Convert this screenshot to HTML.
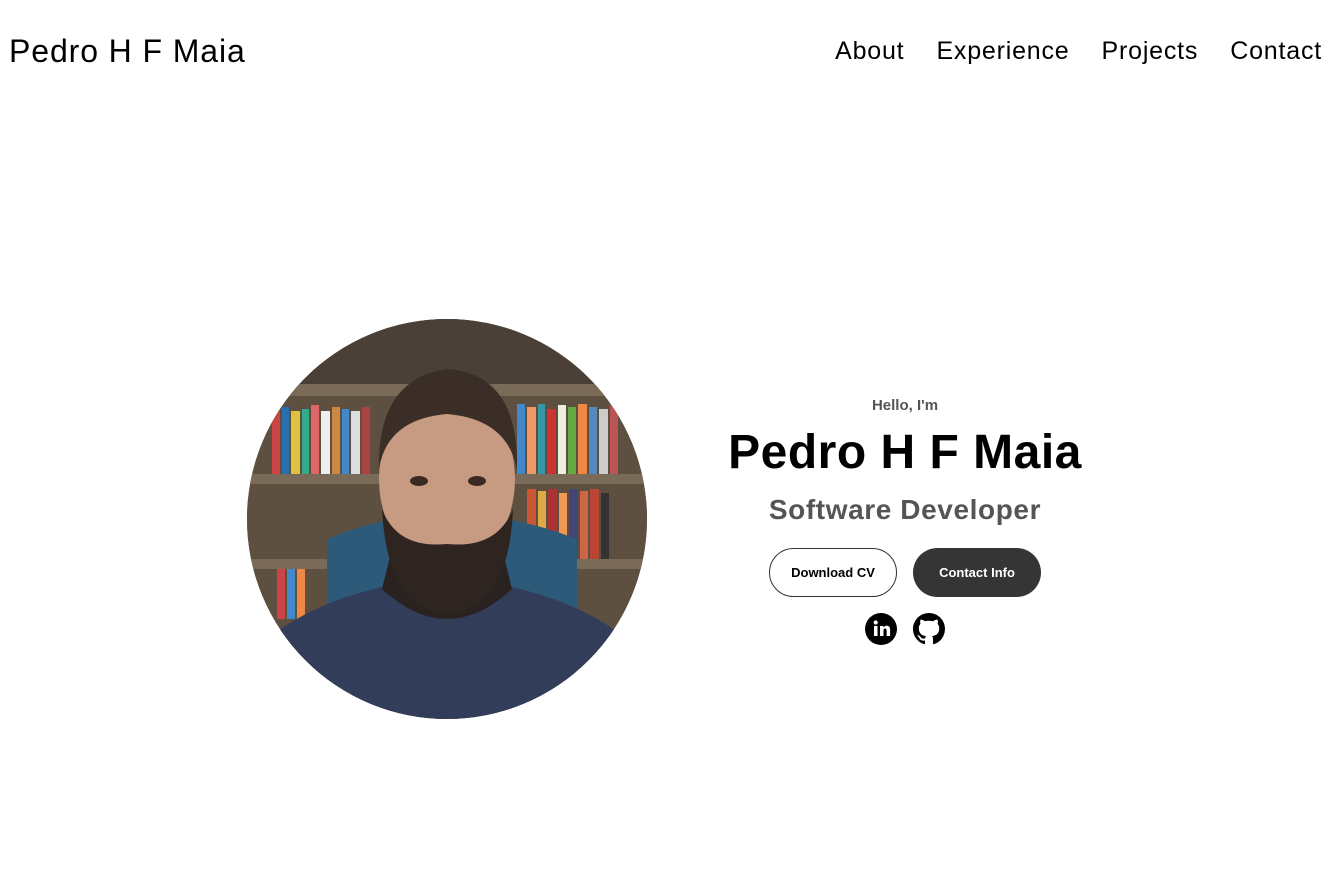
<!DOCTYPE html>
<html><head><meta charset="utf-8"><style>
*{margin:0;padding:0;box-sizing:border-box}
body{width:1336px;height:893px;background:#fff;font-family:"Liberation Sans",sans-serif;position:relative;overflow:hidden;color:#000}
.logo{position:absolute;left:9px;top:33px;font-size:32px;letter-spacing:0.9px}
.nav{position:absolute;right:14px;top:37px;display:flex;gap:32px;font-size:25px;letter-spacing:0.8px}
.pic{position:absolute;left:247px;top:319px;width:400px;height:400px;border-radius:50%;overflow:hidden;background:#6b5a48}
.txt{position:absolute;left:705px;width:400px;text-align:center}
.btn{position:absolute;top:548px;width:128px;height:49px;border-radius:25px;font-size:13px;font-weight:bold;display:flex;align-items:center;justify-content:center}
</style></head><body>
<div class="logo">Pedro H F Maia</div>
<div class="nav"><span>About</span><span>Experience</span><span>Projects</span><span>Contact</span></div>
<div class="pic">
<svg width="400" height="400" viewBox="0 0 400 400">
<rect width="400" height="400" fill="#5e5040"/>
<rect x="0" y="0" width="400" height="70" fill="#4a4038"/>
<rect x="0" y="65" width="400" height="12" fill="#7a6a58"/>
<g fill="#a33">
<rect x="25" y="90" width="8" height="65" fill="#c44"/><rect x="35" y="88" width="7" height="67" fill="#2a6fb0"/><rect x="44" y="92" width="9" height="63" fill="#e0c040"/><rect x="55" y="90" width="7" height="65" fill="#3a8"/><rect x="64" y="86" width="8" height="69" fill="#d66"/><rect x="74" y="92" width="9" height="63" fill="#eee"/><rect x="85" y="88" width="8" height="67" fill="#c84"/><rect x="95" y="90" width="7" height="65" fill="#48c"/><rect x="104" y="92" width="9" height="63" fill="#ddd"/><rect x="115" y="88" width="8" height="67" fill="#a44"/>
<rect x="270" y="85" width="8" height="70" fill="#48c"/><rect x="280" y="88" width="9" height="67" fill="#e96"/><rect x="291" y="85" width="7" height="70" fill="#39a"/><rect x="300" y="90" width="9" height="65" fill="#c33"/><rect x="311" y="86" width="8" height="69" fill="#eed"/><rect x="321" y="88" width="8" height="67" fill="#6a4"/><rect x="331" y="85" width="9" height="70" fill="#e84"/><rect x="342" y="88" width="8" height="67" fill="#58b"/><rect x="352" y="90" width="9" height="65" fill="#ccc"/><rect x="363" y="86" width="8" height="69" fill="#b55"/>
<rect x="280" y="170" width="9" height="70" fill="#c53"/><rect x="291" y="172" width="8" height="68" fill="#da4"/><rect x="301" y="170" width="9" height="70" fill="#a33"/><rect x="312" y="174" width="8" height="66" fill="#e95"/><rect x="322" y="170" width="9" height="70" fill="#447"/><rect x="333" y="172" width="8" height="68" fill="#c64"/><rect x="343" y="170" width="9" height="70" fill="#b43"/><rect x="354" y="174" width="8" height="66" fill="#333"/>
<rect x="30" y="250" width="8" height="50" fill="#c44"/><rect x="40" y="248" width="8" height="52" fill="#48c"/><rect x="50" y="250" width="8" height="50" fill="#e84"/>
</g>
<rect x="0" y="155" width="400" height="10" fill="#7a6a58"/>
<rect x="0" y="240" width="400" height="10" fill="#7a6a58"/>
<path d="M80 220 Q200 170 330 220 L330 290 L80 290Z" fill="#2c5a78"/>
<path d="M20 320 Q70 280 150 265 L200 300 L250 265 Q330 280 380 320 L400 400 L0 400Z" fill="#323d5a"/>
<path d="M135 270 Q200 330 265 270 L255 230 L145 230Z" fill="#2a2220"/>
<ellipse cx="200" cy="160" rx="68" ry="90" fill="#c79a82"/>
<path d="M132 150 Q130 60 200 50 Q272 55 270 150 Q260 100 200 95 Q140 100 132 150Z" fill="#3a2e26"/>
<path d="M135 190 Q140 290 200 295 Q262 290 266 190 Q250 230 200 225 Q150 230 135 190Z" fill="#2e2420"/>
<ellipse cx="172" cy="162" rx="9" ry="5" fill="#3a2a22"/><ellipse cx="230" cy="162" rx="9" ry="5" fill="#3a2a22"/>
</svg></div>
<div class="txt" style="top:397px;font-size:15px;color:#555;font-weight:bold">Hello, I'm</div>
<div class="txt" style="top:425px;font-size:48px;font-weight:bold;letter-spacing:0.5px">Pedro H F Maia</div>
<div class="txt" style="top:494px;font-size:28px;font-weight:bold;color:#555;letter-spacing:0.6px">Software Developer</div>
<div class="btn" style="left:769px;border:1px solid #333;color:#000">Download CV</div>
<div class="btn" style="left:913px;background:#353535;color:#fff">Contact Info</div>
<svg style="position:absolute;left:865px;top:613px" width="32" height="32" viewBox="0 0 32 32"><circle cx="16" cy="16" r="16" fill="#000"/><rect x="9" y="13" width="3.5" height="10" fill="#fff"/><circle cx="10.7" cy="9.5" r="2.1" fill="#fff"/><path d="M15 13h3.3v1.5c.7-1.1 1.9-1.8 3.4-1.8 2.6 0 3.4 1.7 3.4 4.3V23h-3.5v-5.4c0-1.2-.3-2.1-1.5-2.1s-1.6.9-1.6 2.1V23H15z" fill="#fff"/></svg>
<svg style="position:absolute;left:913px;top:613px" width="32" height="32" viewBox="0 0 16 16"><path fill="#000" d="M8 0C3.58 0 0 3.58 0 8c0 3.540 2.29 6.530 5.470 7.590.4.07.55-.17.55-.38 0-.19-.01-.82-.01-1.49-2.01.37-2.53-.49-2.690-.94-.09-.23-.48-.94-.82-1.13-.28-.15-.68-.52-.01-.53.63-.01 1.080.58 1.230.82.72 1.210 1.870.87 2.330.66.07-.52.28-.87.51-1.07-1.78-.2-3.64-.89-3.64-3.950 0-.87.31-1.59.82-2.150-.08-.2-.36-1.020.08-2.120 0 0 .67-.21 2.200.82.64-.18 1.320-.27 2-.27.68 0 1.360.09 2 .27 1.530-1.040 2.200-.82 2.200-.82.44 1.100.16 1.920.08 2.120.51.56.82 1.270.82 2.150 0 3.070-1.870 3.750-3.650 3.950.29.25.54.73.54 1.480 0 1.070-.01 1.930-.01 2.200 0 .21.15.46.55.38A8.013 8.013 0 0016 8c0-4.420-3.580-8-8-8z"/></svg>
</body></html>
